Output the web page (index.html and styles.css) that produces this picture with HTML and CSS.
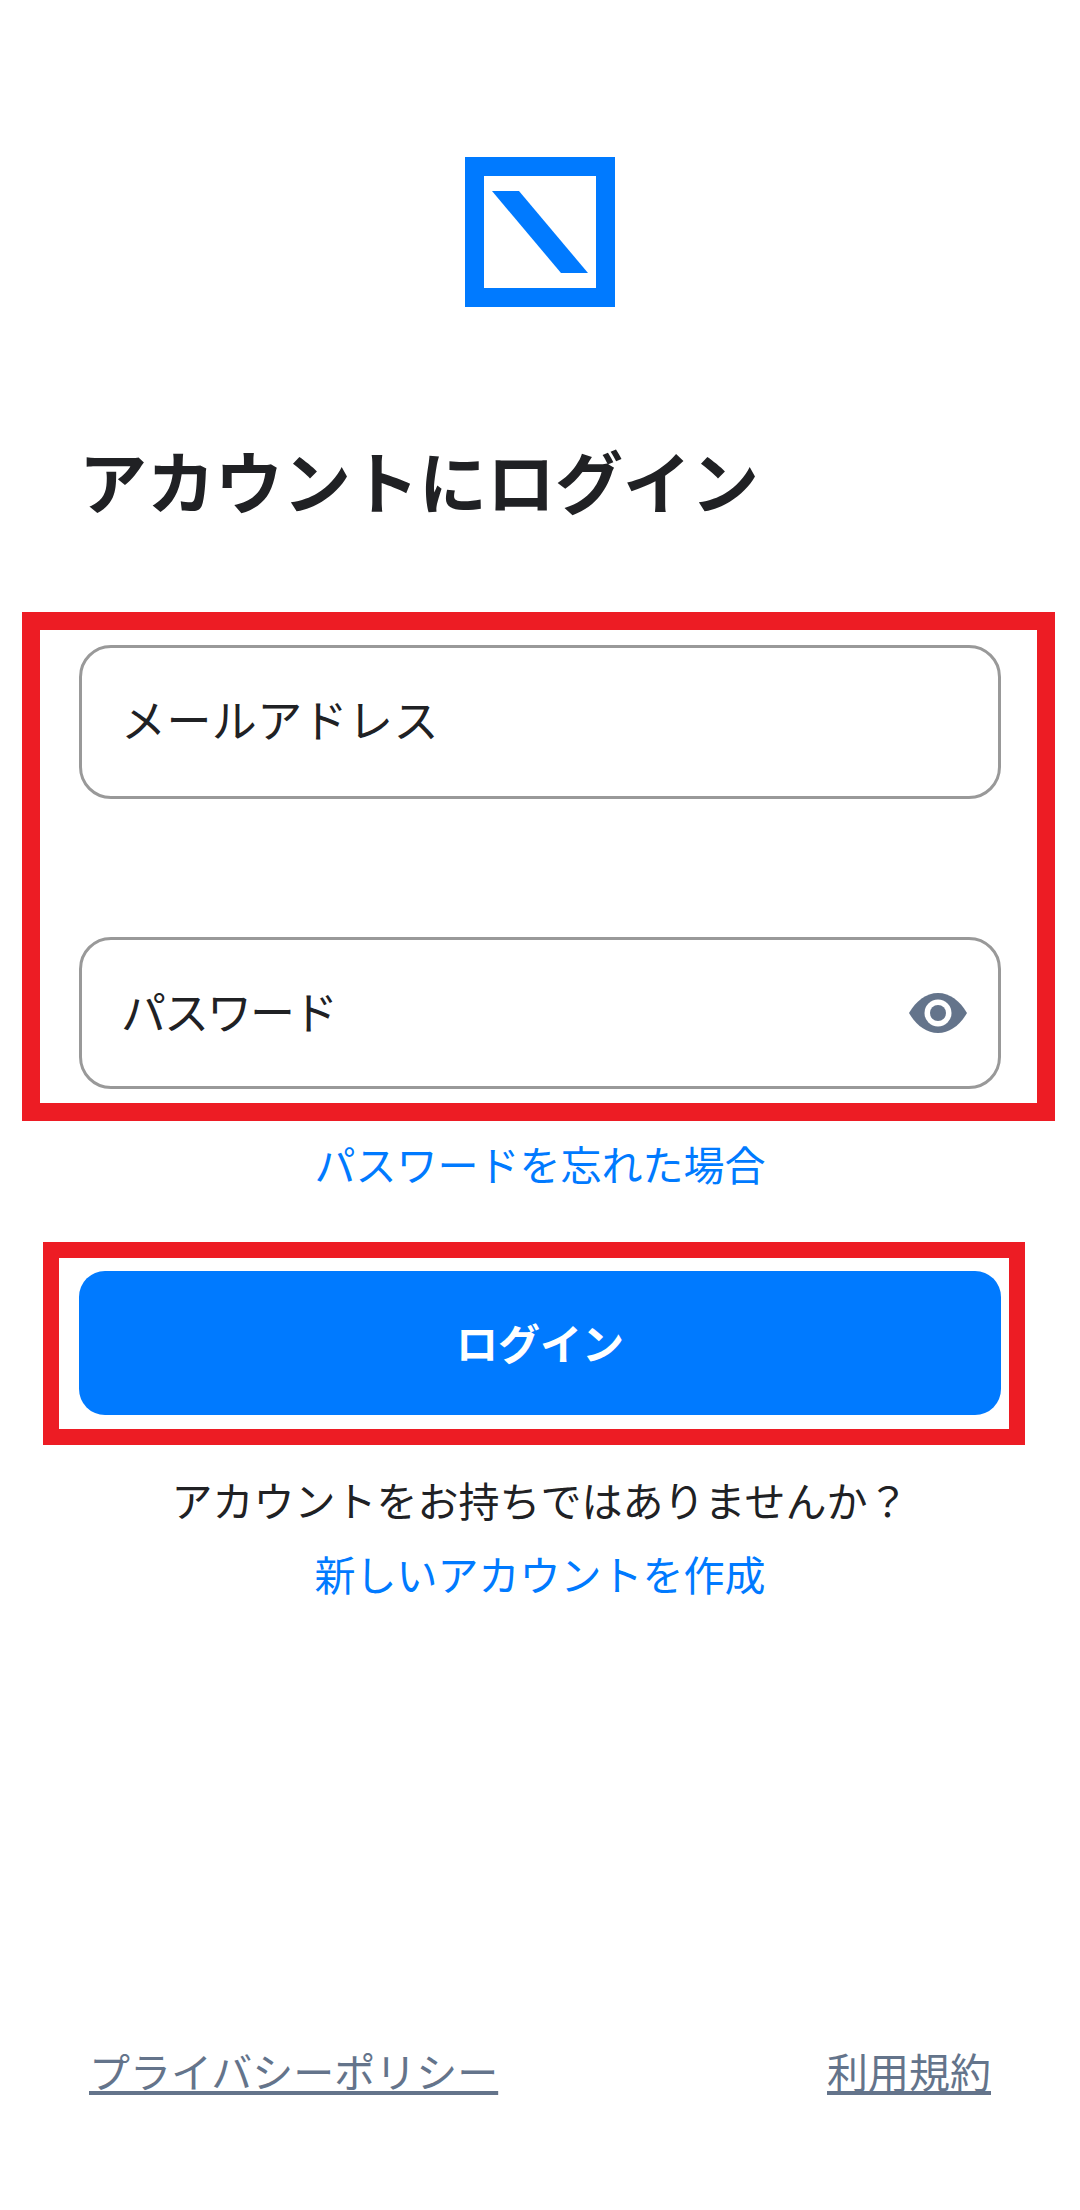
FILE: index.html
```html
<!DOCTYPE html>
<html lang="ja">
<head>
  <meta charset="UTF-8">
  <title>アカウントにログイン</title>
  <meta name="viewport" content="width=device-width, initial-scale=1.0">
  <link rel="stylesheet" href="styles.css">
</head>
<body>

  <div class="logo">
    <svg width="150" height="150" viewBox="0 0 150 150">
      <rect x="9.5" y="9.5" width="131" height="131" fill="none" stroke="#007aff" stroke-width="19"/>
      <polygon points="27,34 54,34 123,116 96,116" fill="#007aff"/>
    </svg>
  </div>

  <h1 class="title">アカウントにログイン</h1>

  <div class="mark mark-fields">
    <div class="field">
      <span class="field-label">メールアドレス</span>
    </div>
    <div class="field field-password">
      <span class="field-label">パスワード</span>
      <svg class="eye" width="58" height="40" viewBox="0 0 58 40">
        <path d="M0 20 C7 8 17 0 29 0 C41 0 51 8 58 20 C51 32 41 40 29 40 C17 40 7 32 0 20 Z" fill="#64748b"/>
        <circle cx="29" cy="20" r="13.5" fill="#fff"/>
        <circle cx="29" cy="20" r="8" fill="#64748b"/>
      </svg>
    </div>
  </div>

  <a class="link forgot" href="#">パスワードを忘れた場合</a>

  <div class="mark mark-button">
    <button class="login">ログイン</button>
  </div>

  <p class="signup-text">アカウントをお持ちではありませんか？</p>
  <a class="link signup" href="#">新しいアカウントを作成</a>

  <div class="footer">
    <a href="#">プライバシーポリシー</a>
    <a href="#">利用規約</a>
  </div>

</body>
</html>
```

FILE: styles.css
```css
* {
  box-sizing: border-box;
}
body {
  margin: 0;
  height: 2210px;
  background: #fff;
  color: #202124;
  font-family: "Noto Sans CJK JP", "Noto Sans", sans-serif;
  display: flex;
  flex-direction: column;
}
.logo {
  display: flex;
  justify-content: center;
  padding-top: 157px;
  height: 307px;
}
.logo svg {
  display: block;
}
.title {
  margin: 135px 0 0 79px;
  font-size: 68px;
  line-height: 76px;
  font-weight: 700;
  color: #202124;
}
.mark {
  border: solid #ed1c24;
}
.mark-fields {
  margin: 94px 25px 0 22px;
  height: 509px;
  border-width: 18px;
  padding: 15px 36px 0 39px;
  display: flex;
  flex-direction: column;
  gap: 138px;
}
.field {
  height: 154px;
  border: 3px solid #999;
  border-radius: 32px;
  padding-left: 39px;
  display: flex;
  align-items: center;
  justify-content: space-between;
  font-size: 45px;
}
.field-label {
  margin-bottom: 8px;
  letter-spacing: 0.4px;
}
.field-password {
  height: 152px;
  padding-right: 31px;
}
.field-password .field-label {
  margin-bottom: 6px;
  letter-spacing: -2px;
}
.eye {
  flex: none;
}
.link {
  color: #007aff;
  font-size: 41px;
  line-height: 60px;
  text-align: center;
  text-decoration: none;
}
.forgot {
  margin-top: 12px;
}
.mark-button {
  margin: 49px 55px 0 43px;
  height: 203px;
  border-width: 16px;
  padding: 13px 8px 0 20px;
}
.login {
  display: block;
  width: 100%;
  height: 144px;
  padding: 0 0 3px;
  border: none;
  border-radius: 26px;
  background: #007aff;
  color: #fff;
  font-family: inherit;
  font-size: 42px;
  font-weight: 700;
}
.signup-text {
  margin: 24px 0 0;
  font-size: 41px;
  line-height: 60px;
  text-align: center;
}
.signup {
  margin-top: 14px;
}
.footer {
  margin-top: auto;
  padding: 0 89px 110px 89px;
  display: flex;
  justify-content: space-between;
}
.footer a {
  color: #64748b;
  font-size: 41px;
  line-height: 60px;
  text-decoration: underline;
}
```
